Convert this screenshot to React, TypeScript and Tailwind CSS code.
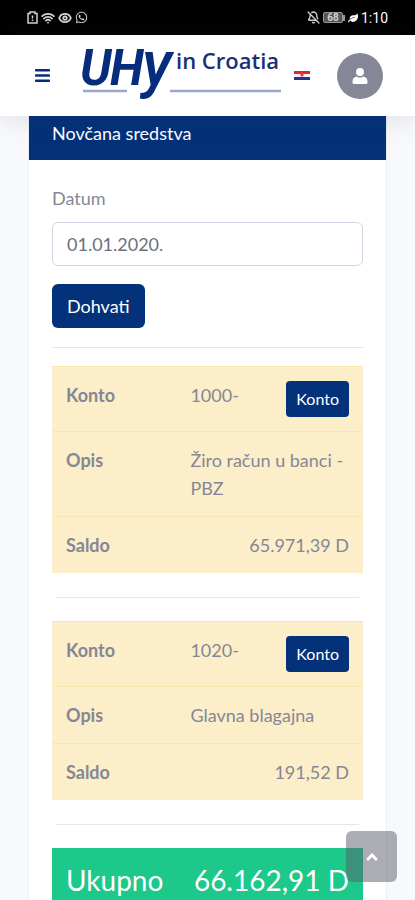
import React from 'react';
import { FaBars, FaAngleUp, FaWhatsapp, FaLeaf } from 'react-icons/fa';
import { BellOff, Eye, Wifi } from 'lucide-react';

const accounts = [
    { konto: '1000-', opis: 'Žiro račun u banci - PBZ', saldo: '65.971,39 D' },
    { konto: '1020-', opis: 'Glavna blagajna', saldo: '191,52 D' },
];

const StatusBar = () => (
    <div className="flex h-[35px] shrink-0 items-center justify-between bg-black px-[27px] font-[Roboto,sans-serif] text-[#d4d4d4]">
        <div className="flex items-center gap-[3px]">
            <svg className="h-[13px] w-[11px]" viewBox="0 0 11 13" fill="none" stroke="currentColor" strokeWidth="1.5">
                <path d="M1 2.5h2V1h5v1.500h2V12H1z" />
                <path d="M5.500 4.500v3M5.500 8.500v1.500" />
            </svg>
            <Wifi className="size-[14px]" strokeWidth={3} />
            <Eye className="size-[14px]" strokeWidth={3} />
            <FaWhatsapp className="size-[13px]" />
        </div>
        <div className="flex items-center gap-[3px]">
            <BellOff className="size-[13px]" strokeWidth={2.5} />
            <div className="flex items-center">
                <span className="flex h-[11px] w-5 items-center justify-center rounded-xs border border-[#999999] bg-[#555555] text-[10px] font-bold">68</span>
                <span className="h-1.5 w-0.5 bg-[#999999]" />
            </div>
            <FaLeaf className="size-[10px] text-white" />
            <span className="text-sm text-white">1:10</span>
        </div>
    </div>
);

const Logo = () => (
    <svg className="h-[54px] w-[200px] overflow-visible" viewBox="0 0 200 54" role="img" aria-label="UHY in Croatia">
        <path d="M1 42h44M88 42h111" stroke="#9aa8cb" strokeWidth="2.500" />
        <g fill="#052d7b" fontFamily="Roboto, sans-serif" fontStyle="italic">
            <text x="-2" y="36" fontSize="49" fontWeight="700">U</text>
            <text x="28" y="36" fontSize="49" fontWeight="700">H</text>
            <text x="60" y="36" fontSize="63" fontWeight="500">y</text>
        </g>
        <text x="94" y="20" fill="#1b2f78" fontFamily="'Open Sans', sans-serif" fontSize="22" fontWeight="600">in Croatia</text>
    </svg>
);

const CroatianFlag = () => (
    <svg className="h-[9px] w-4" viewBox="0 0 16 9">
        <path d="M0 0h16v3H0z" fill="#e8222e" />
        <path d="M0 3h16v3H0z" fill="#f4f4f6" />
        <path d="M0 6h16v3H0z" fill="#2b2f88" />
        <path d="M6.500 1.500h3v3L8 6l-1.500-1.500z" fill="#d83a46" />
    </svg>
);

const Topbar = () => (
    <header className="relative z-10 flex h-[81px] shrink-0 items-center justify-between bg-white pr-8 pl-[34px] shadow-[0_2px_28px_rgba(58,59,69,0.15)]">
        <button aria-label="Izbornik" className="text-[#052d7b]">
            <FaBars className="size-[17px]" />
        </button>
        <div className="flex items-center gap-3 pl-1">
            <Logo />
            <button aria-label="Jezik">
                <CroatianFlag />
            </button>
        </div>
        <button aria-label="Korisnik" className="flex size-[46px] items-center justify-center rounded-full bg-[#858796] text-white">
            <svg className="size-4" viewBox="0 0 16 16" fill="currentColor">
                <circle cx="8" cy="4" r="4" />
                <path d="M4.500 8.500C6.500 10 9.500 10 11.500 8.500C14 9 15.500 11 15.500 13.500V14.500Q15.500 16 14 16H2Q.5 16 .5 14.500V13.500C.5 11 2 9 4.500 8.500z" />
            </svg>
        </button>
    </header>
);

const AccountTable = ({ account }: { account: (typeof accounts)[number] }) => (
    <table className="w-full border-collapse bg-[#fceec9] text-left">
        <tbody>
            <tr className="border-t border-[#f9e6b0] align-top">
                <th className="w-2/5 p-3.5 font-bold">Konto</th>
                <td className="p-3.5">
                    <div className="flex items-start justify-between">
                        <span>{account.konto}</span>
                        <button className="h-9 rounded-sm bg-[#03317a] px-2.5 text-base text-white">Konto</button>
                    </div>
                </td>
            </tr>
            <tr className="border-t border-[#f9e6b0] align-top">
                <th className="p-3.5 font-bold">Opis</th>
                <td className="p-3.5">{account.opis}</td>
            </tr>
            <tr className="border-t border-[#f9e6b0] align-top">
                <th className="p-3.5 font-bold">Saldo</th>
                <td className="p-3.5 text-right">{account.saldo}</td>
            </tr>
        </tbody>
    </table>
);

export default function App() {
    return (
        <div className="flex h-screen flex-col overflow-hidden bg-[#f8f9fc] font-[Lato,sans-serif] text-lg leading-7 text-[#858796]">
            <StatusBar />
            <Topbar />
            <main className="min-h-0 flex-1 overflow-hidden px-7">
                <div className="border-x border-[#eceef5] bg-white">
                    <h1 className="bg-[#03317a] px-[23px] pt-[3px] pb-[13px] text-white">Novčana sredstva</h1>
                    <div className="px-[23px] pt-6">
                        <form onSubmit={(e) => e.preventDefault()}>
                            <label htmlFor="datum" className="block">Datum</label>
                            <input
                                id="datum"
                                type="text"
                                defaultValue="01.01.2020."
                                className="mt-2.5 block h-11 w-full rounded-md border border-[#d1d3e2] bg-white px-3.5 text-[#6e707e]"
                            />
                            <button type="submit" className="mt-[18px] h-11 rounded-md bg-[#03317a] px-[15px] text-white">Dohvati</button>
                        </form>
                        <hr className="mt-[19px] mb-[18px] border-[#e6e6ea]" />
                        {accounts.map((account) => (
                            <div key={account.konto}>
                                <AccountTable account={account} />
                                <hr className="mx-1 mt-6 mb-[23px] border-[#e6e6ea]" />
                            </div>
                        ))}
                        <div className="flex items-center justify-between bg-[#1cc88a] p-3.5 text-[28px] leading-9 text-white">
                            <span>Ukupno</span>
                            <span>66.162,91 D</span>
                        </div>
                    </div>
                </div>
            </main>
            <button
                aria-label="Na vrh"
                className="fixed right-[18px] bottom-[18px] z-20 flex size-[51px] items-center justify-center rounded-md bg-[#5a5c69]/50 text-white"
            >
                <FaAngleUp className="size-[18px]" />
            </button>
        </div>
    );
}
